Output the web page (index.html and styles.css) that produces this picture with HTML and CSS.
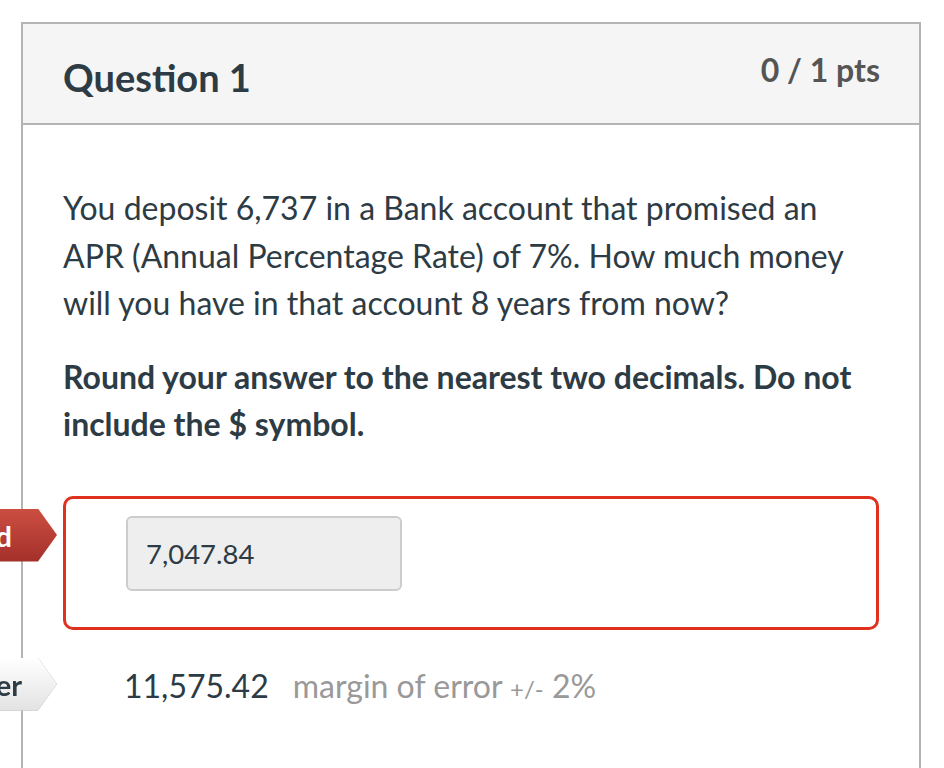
FILE: index.html
```html
<!DOCTYPE html>
<html lang="en">
<head>
  <meta charset="UTF-8" />
  <meta name="viewport" content="width=device-width, initial-scale=1.0" />
  <title>Question 1</title>
  <link rel="stylesheet" href="styles.css">
</head>
<body>
  <div class="question">
    <div class="question-header">
      <h2 class="question-title">Question 1</h2>
      <div class="points">0 / 1 pts</div>
    </div>

    <div class="question-body">
      <p>You deposit 6,737 in a Bank account that promised an APR (Annual Percentage Rate) of 7%. How much money will you have in that account 8 years from now?</p>
      <p class="strong">Round your answer to the nearest two decimals. Do not include the $ symbol.</p>

      <div class="answer-row">
        <span class="tag tag-wrong"><span class="tag-inner">You Answered</span></span>
        <div class="answer-box">
          <input class="answer-input" type="text" value="7,047.84" readonly>
        </div>
      </div>

      <div class="answer-row correct-row">
        <span class="tag tag-right"><span class="tag-inner">Correct Answer</span></span>
        <div class="correct">
          <span class="correct-value">11,575.42</span>
          <span class="margin">margin of error <small>+/-</small> 2%</span>
        </div>
      </div>
    </div>
  </div>
</body>
</html>
```

FILE: styles.css
```css
body {
  margin: 0;
  padding-top: 22px;
  background: #fff;
  color: #2d3b45;
  font-family: Lato, 'Open Sans', sans-serif;
  overflow: hidden;
}
.question {
  margin-left: 21px;
  width: 896px;
  border: 2px solid #b4b4b4;
  border-bottom: none;
  min-height: 800px;
}
.question-header {
  background: #f5f5f5;
  border-bottom: 2px solid #b4b4b4;
  height: 99px;
  display: flex;
  justify-content: space-between;
  align-items: flex-start;
  padding: 0 39px 0 40px;
}
.question-title {
  margin: 0;
  padding-top: 28px;
  font-size: 38px;
  font-weight: 700;
  line-height: 50px;
  color: #2d3b45;
}
.points {
  padding-top: 26px;
  font-size: 32px;
  font-weight: 700;
  line-height: 40px;
  color: #555;
}
.question-body {
  padding: 59px 40px 0 40px;
}
.question-body p {
  margin: 0 0 26px;
  font-size: 32px;
  line-height: 47.5px;
}
.question-body p.strong { font-weight: 700; }

/* answer rows */
.answer-row {
  position: relative;
}
.answer-box {
  box-sizing: border-box;
  margin-top: 48px;
  border: 3px solid #e0301e;
  border-radius: 10px;
  height: 134px;
  padding: 17px 0 0 60px;
}
.answer-input {
  box-sizing: border-box;
  width: 276px;
  height: 75px;
  padding: 0 18px;
  background: #eee;
  border: 2px solid #ccc;
  border-radius: 6px;
  font-family: Lato, sans-serif;
  font-size: 27.5px;
  color: #2d3b45;
}
.correct-row { margin-top: 28px; }
.correct {
  padding-left: 61px;
  height: 56px;
  display: flex;
  align-items: center;
  gap: 24px;
}
.correct-value {
  font-size: 32px;
  color: #2d3b45;
}
.margin {
  font-size: 32px;
  color: #999;
}
.margin small { font-size: 24px; }

/* arrow tags, cut off by the left edge */
.tag {
  position: absolute;
  right: calc(100% + 6px);
  filter: drop-shadow(0 0 0.6px #999);
}
.tag-inner {
  display: block;
  height: 53px;
  line-height: 53px;
  padding: 0 45px 0 30px;
  font-size: 29px;
  font-weight: 700;
  white-space: nowrap;
  clip-path: polygon(0 0, calc(100% - 19px) 0, 100% 50%, calc(100% - 19px) 100%, 0 100%);
}
.tag-wrong { top: 13px; filter: none; }
.tag-wrong .tag-inner {
  color: #fff;
  background: linear-gradient(#cc4e42, #a3302a);
}
.tag-right { top: 0; }
.tag-right .tag-inner {
  padding-right: 35px;
  color: #2d3b45;
  background: linear-gradient(#fff, #e2e2e2);
}
```
